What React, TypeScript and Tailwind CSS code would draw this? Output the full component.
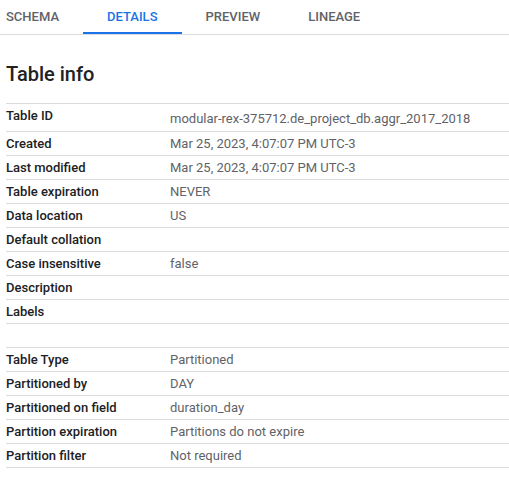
const tabs = ["SCHEMA", "DETAILS", "PREVIEW", "LINEAGE"];

type Row = { label: string; value?: string; tall?: boolean };

const info: Row[] = [
  { label: "Table ID", value: "modular-rex-375712.de_project_db.aggr_2017_2018", tall: true },
  { label: "Created", value: "Mar 25, 2023, 4:07:07 PM UTC-3" },
  { label: "Last modified", value: "Mar 25, 2023, 4:07:07 PM UTC-3" },
  { label: "Table expiration", value: "NEVER" },
  { label: "Data location", value: "US" },
  { label: "Default collation" },
  { label: "Case insensitive", value: "false" },
  { label: "Description" },
  { label: "Labels" },
];

const partition: Row[] = [
  { label: "Table Type", value: "Partitioned" },
  { label: "Partitioned by", value: "DAY" },
  { label: "Partitioned on field", value: "duration_day" },
  { label: "Partition expiration", value: "Partitions do not expire" },
  { label: "Partition filter", value: "Not required" },
];

const InfoTable = ({ rows }: { rows: Row[] }) => (
  <div className="border-t border-[#dadce0]">
    {rows.map((row) => (
      <div key={row.label} className="flex items-start border-b border-[#dadce0]">
        <div className="w-[164px] shrink-0 text-[13px] leading-[23px] font-medium text-[#202124]">
          {row.label}
        </div>
        <div
          className={
            row.tall
              ? "pt-[3px] pb-[1px] text-[13px] leading-[23px] text-[#5f6368]"
              : "text-[13px] leading-[23px] text-[#5f6368]"
          }
        >
          {row.value}
        </div>
      </div>
    ))}
  </div>
);

export default function App() {
  return (
    <div className="h-[493px] w-[509px] overflow-hidden bg-white font-['Roboto',sans-serif]">
      {/* Tabs */}
      <div className="flex h-[35px] border-b border-[#dadce0]">
        {tabs.map((tab, i) => (
          <div
            key={tab}
            className={
              (i === 0 ? "pl-[6px] pr-6 " : "px-6 ") +
              (tab === "DETAILS"
                ? "border-b-2 border-[#1a73e8] text-[#1a73e8] "
                : "border-b-2 border-transparent text-[#5f6368] ") +
              "flex items-center pt-[1px] text-[13px] font-medium"
            }
          >
            {tab}
          </div>
        ))}
      </div>

      <div className="pl-[6px]">
        {/* Title */}
        <h2 className="pt-[25px] pb-[15px] text-[20px] leading-[28px] font-medium text-[#202124]">
          Table info
        </h2>

        <InfoTable rows={info} />

        <div className="h-[23px]" />

        <InfoTable rows={partition} />
      </div>
    </div>
  );
}
